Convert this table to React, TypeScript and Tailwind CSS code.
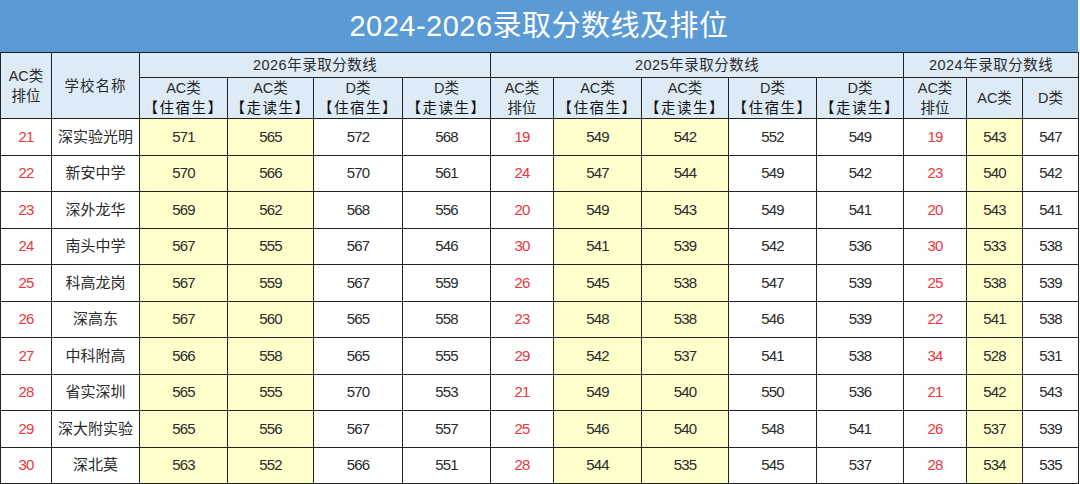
import React from 'react';

type Row = {
    rank: number;
    name: string;
    y26: [number, number, number, number];
    rank25: number;
    y25: [number, number, number, number];
    rank24: number;
    y24: [number, number];
};

const rows: Row[] = [
    { rank: 21, name: '深实验光明', y26: [571, 565, 572, 568], rank25: 19, y25: [549, 542, 552, 549], rank24: 19, y24: [543, 547] },
    { rank: 22, name: '新安中学', y26: [570, 566, 570, 561], rank25: 24, y25: [547, 544, 549, 542], rank24: 23, y24: [540, 542] },
    { rank: 23, name: '深外龙华', y26: [569, 562, 568, 556], rank25: 20, y25: [549, 543, 549, 541], rank24: 20, y24: [543, 541] },
    { rank: 24, name: '南头中学', y26: [567, 555, 567, 546], rank25: 30, y25: [541, 539, 542, 536], rank24: 30, y24: [533, 538] },
    { rank: 25, name: '科高龙岗', y26: [567, 559, 567, 559], rank25: 26, y25: [545, 538, 547, 539], rank24: 25, y24: [538, 539] },
    { rank: 26, name: '深高东', y26: [567, 560, 565, 558], rank25: 23, y25: [548, 538, 546, 539], rank24: 22, y24: [541, 538] },
    { rank: 27, name: '中科附高', y26: [566, 558, 565, 555], rank25: 29, y25: [542, 537, 541, 538], rank24: 34, y24: [528, 531] },
    { rank: 28, name: '省实深圳', y26: [565, 555, 570, 553], rank25: 21, y25: [549, 540, 550, 536], rank24: 21, y24: [542, 543] },
    { rank: 29, name: '深大附实验', y26: [565, 556, 567, 557], rank25: 25, y25: [546, 540, 548, 541], rank24: 26, y24: [537, 539] },
    { rank: 30, name: '深北莫', y26: [563, 552, 566, 551], rank25: 28, y25: [544, 535, 545, 537], rank24: 28, y24: [534, 535] },
];

const widths = [51, 88, 88, 86, 89, 88, 63, 88, 87, 88, 87, 63, 56, 56];

// 表头 / 数据单元格样式
const th = 'border border-[#222] bg-[#ddebf7] font-normal text-[14.5px] leading-[20px] text-[#2a2a2a] p-0 text-center align-middle';
const td = 'border border-[#222] p-0 text-center align-middle text-[15px] text-[#2a2a2a]';
const num = 'tracking-[-0.8px]';
const yellow = 'bg-[#ffffcc]';
const red = 'text-[#e8383d]';

function Stack({ top, bottom }: { top: string; bottom: string }) {
    const wide = bottom.startsWith('【');
    return (
        <div className="flex flex-col items-center">
            <span>{top}</span>
            <span className={wide ? 'tracking-[1.5px] text-[#111]' : ''}>{bottom}</span>
        </div>
    );
}

function Num({ v, className = '' }: { v: number; className?: string }) {
    return <td className={`${td} ${num} ${className}`}>{v}</td>;
}

export default function App() {
    return (
        <div
            className="w-[1080px] h-[484px] bg-white overflow-hidden"
            style={{ fontFamily: '"Liberation Sans", "Noto Sans CJK SC", sans-serif' }}
        >
            <div className="w-[1078px] h-[52px] bg-[#5b9bd5] flex items-center justify-center pt-[2px] text-white text-[29px] tracking-[0.5px]">
                2024-2026录取分数线及排位
            </div>
            <table className="table-fixed border-collapse w-[1078px] border-l border-l-[#888]">
                <colgroup>
                    {widths.map((w, i) => (
                        <col key={i} style={{ width: w }} />
                    ))}
                </colgroup>
                <thead>
                    <tr className="h-[25px]">
                        <th rowSpan={2} className={th}>
                            <Stack top="AC类" bottom="排位" />
                        </th>
                        <th rowSpan={2} className={`${th} tracking-[1px]`}>学校名称</th>
                        <th colSpan={4} className={`${th} tracking-[0.5px]`}>2026年录取分数线</th>
                        <th colSpan={5} className={`${th} tracking-[0.5px]`}>2025年录取分数线</th>
                        <th colSpan={3} className={`${th} tracking-[0.5px]`}>2024年录取分数线</th>
                    </tr>
                    <tr className="h-[40px]">
                        <th className={th}><Stack top="AC类" bottom="【住宿生】" /></th>
                        <th className={th}><Stack top="AC类" bottom="【走读生】" /></th>
                        <th className={th}><Stack top="D类" bottom="【住宿生】" /></th>
                        <th className={th}><Stack top="D类" bottom="【走读生】" /></th>
                        <th className={th}><Stack top="AC类" bottom="排位" /></th>
                        <th className={th}><Stack top="AC类" bottom="【住宿生】" /></th>
                        <th className={th}><Stack top="AC类" bottom="【走读生】" /></th>
                        <th className={th}><Stack top="D类" bottom="【住宿生】" /></th>
                        <th className={th}><Stack top="D类" bottom="【走读生】" /></th>
                        <th className={th}><Stack top="AC类" bottom="排位" /></th>
                        <th className={th}>AC类</th>
                        <th className={th}>D类</th>
                    </tr>
                </thead>
                <tbody>
                    {rows.map((r) => (
                        <tr key={r.rank} className="h-[36.5px]">
                            <Num v={r.rank} className={red} />
                            <td className={td}>{r.name}</td>
                            <Num v={r.y26[0]} className={yellow} />
                            <Num v={r.y26[1]} className={yellow} />
                            <Num v={r.y26[2]} />
                            <Num v={r.y26[3]} />
                            <Num v={r.rank25} className={red} />
                            <Num v={r.y25[0]} className={yellow} />
                            <Num v={r.y25[1]} className={yellow} />
                            <Num v={r.y25[2]} />
                            <Num v={r.y25[3]} />
                            <Num v={r.rank24} className={red} />
                            <Num v={r.y24[0]} className={yellow} />
                            <Num v={r.y24[1]} />
                        </tr>
                    ))}
                </tbody>
            </table>
        </div>
    );
}
